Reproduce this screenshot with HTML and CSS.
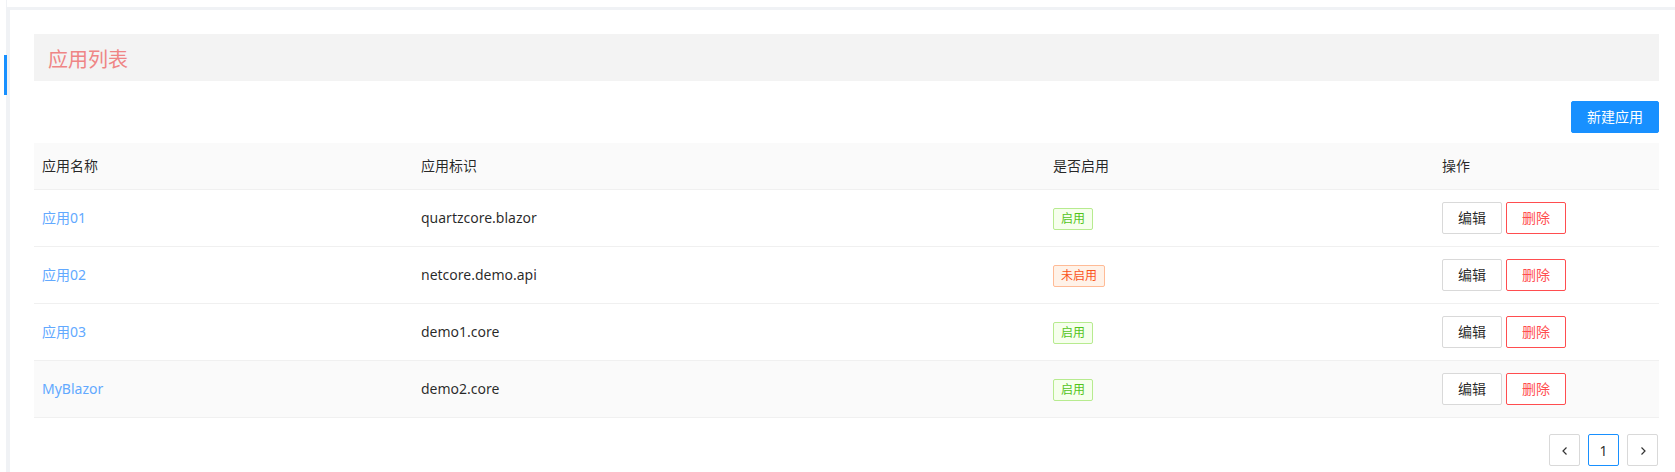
FILE: index.html
```html
<!DOCTYPE html>
<html lang="zh-CN">
<head>
<meta charset="utf-8">
<title>应用列表</title>
<link rel="stylesheet" href="styles.css">
</head>
<body>
<div class="layout">
  <aside class="sider"><div class="indicator"></div></aside>
  <main class="main">
    <div class="page-title">应用列表</div>
    <div class="toolbar"><button class="btn btn-primary">新建应用</button></div>
    <table class="table">
      <colgroup>
        <col class="c1"><col class="c2"><col class="c3"><col class="c4">
      </colgroup>
      <thead>
        <tr><th>应用名称</th><th>应用标识</th><th>是否启用</th><th>操作</th></tr>
      </thead>
      <tbody>
        <tr>
          <td><a class="link">应用01</a></td>
          <td>quartzcore.blazor</td>
          <td><span class="tag tag-green">启用</span></td>
          <td><div class="actions"><button class="btn">编辑</button><button class="btn btn-danger">删除</button></div></td>
        </tr>
        <tr>
          <td><a class="link">应用02</a></td>
          <td>netcore.demo.api</td>
          <td><span class="tag tag-volcano">未启用</span></td>
          <td><div class="actions"><button class="btn">编辑</button><button class="btn btn-danger">删除</button></div></td>
        </tr>
        <tr>
          <td><a class="link">应用03</a></td>
          <td>demo1.core</td>
          <td><span class="tag tag-green">启用</span></td>
          <td><div class="actions"><button class="btn">编辑</button><button class="btn btn-danger">删除</button></div></td>
        </tr>
        <tr class="hover">
          <td><a class="link">MyBlazor</a></td>
          <td>demo2.core</td>
          <td><span class="tag tag-green">启用</span></td>
          <td><div class="actions"><button class="btn">编辑</button><button class="btn btn-danger">删除</button></div></td>
        </tr>
      </tbody>
    </table>
    <div class="pagination">
      <span class="page-item"><svg width="10" height="10" viewBox="0 0 10 10"><path d="M6.5 1.5 3 5l3.5 3.5" fill="none" stroke="#333" stroke-width="1.2"/></svg></span>
      <span class="page-item active">1</span>
      <span class="page-item"><svg width="10" height="10" viewBox="0 0 10 10"><path d="M3.5 1.5 7 5 3.5 8.5" fill="none" stroke="#333" stroke-width="1.2"/></svg></span>
    </div>
  </main>
</div>
</body>
</html>
```
FILE: styles.css
```css
* { box-sizing: border-box; }
html, body { margin: 0; padding: 0; background: #fff; }
body {
  font-family: "Noto Sans", "Noto Sans CJK SC", sans-serif;
  font-size: 14px;
  color: rgba(0, 0, 0, 0.85);
  overflow: hidden;
}
.layout { display: flex; min-height: 472px; }
.sider {
  width: 7px;
  flex: none;
  border-right: 1px solid #f0f2f5;
}
.indicator {
  width: 3px;
  height: 40px;
  margin-top: 55px;
  margin-left: 4px;
  background: #1890ff;
}
.main {
  flex: 1;
  margin-top: 7px;
  border-top: 3px solid #f0f2f5;
  border-left: 3px solid #f0f2f5;
  padding: 24px 16px 0 24px;
}
.page-title {
  height: 47px;
  padding-top: 5px;
  line-height: 42px;
  background: #f3f3f3;
  padding-left: 14px;
  font-size: 20px;
  color: #ef8585;
}
.toolbar {
  display: flex;
  justify-content: flex-end;
  margin-top: 20px;
  margin-bottom: 10px;
}
.btn {
  font-family: inherit;
  font-size: 14px;
  height: 32px;
  padding: 0 15px;
  line-height: 30px;
  border: 1px solid #d9d9d9;
  border-radius: 2px;
  background: #fff;
  color: rgba(0, 0, 0, 0.85);
  cursor: pointer;
}
.btn-primary { background: #1890ff; border-color: #1890ff; color: #fff; width: 88px; padding: 0; }
.btn-danger { border-color: #ff4d4f; color: #ff4d4f; }
.table { width: 100%; border-collapse: collapse; table-layout: fixed; }
.c1 { width: 379px; }
.c2 { width: 632px; }
.c3 { width: 389px; }
.c4 { width: auto; }
.table th {
  text-align: left;
  font-weight: normal;
  background: #fafafa;
  padding: 12px 8px;
  line-height: 22px;
  border-bottom: 1px solid #f0f0f0;
}
.table td {
  padding: 12px 8px;
  height: 57px;
  line-height: 22px;
  border-bottom: 1px solid #f0f0f0;
  color: rgba(0, 0, 0, 0.85);
}
.table tr.hover td { background: #fafafa; }
.link { color: #62a9ff; text-decoration: none; }
.tag {
  display: inline-block;
  height: 22px;
  line-height: 20px;
  padding: 0 7px;
  font-size: 12px;
  border: 1px solid;
  border-radius: 2px;
}
.tag-green { color: #52c41a; background: #f6ffed; border-color: #b7eb8f; }
.tag-volcano { color: #fa541c; background: #fff2e8; border-color: #ffbb96; }
.actions { display: flex; gap: 4px; }
.actions .btn { width: 60px; padding: 0; }
.pagination {
  display: flex;
  justify-content: flex-end;
  gap: 8px;
  margin-top: 16px;
  padding-right: 1px;
}
.page-item {
  width: 31px;
  height: 32px;
  border: 1px solid #d9d9d9;
  border-radius: 2px;
  display: flex;
  align-items: center;
  justify-content: center;
  font-size: 14px;
  color: rgba(0, 0, 0, 0.85);
}
.page-item svg { margin-top: 2px; }
.page-item.active { border-color: #1890ff; }
```
